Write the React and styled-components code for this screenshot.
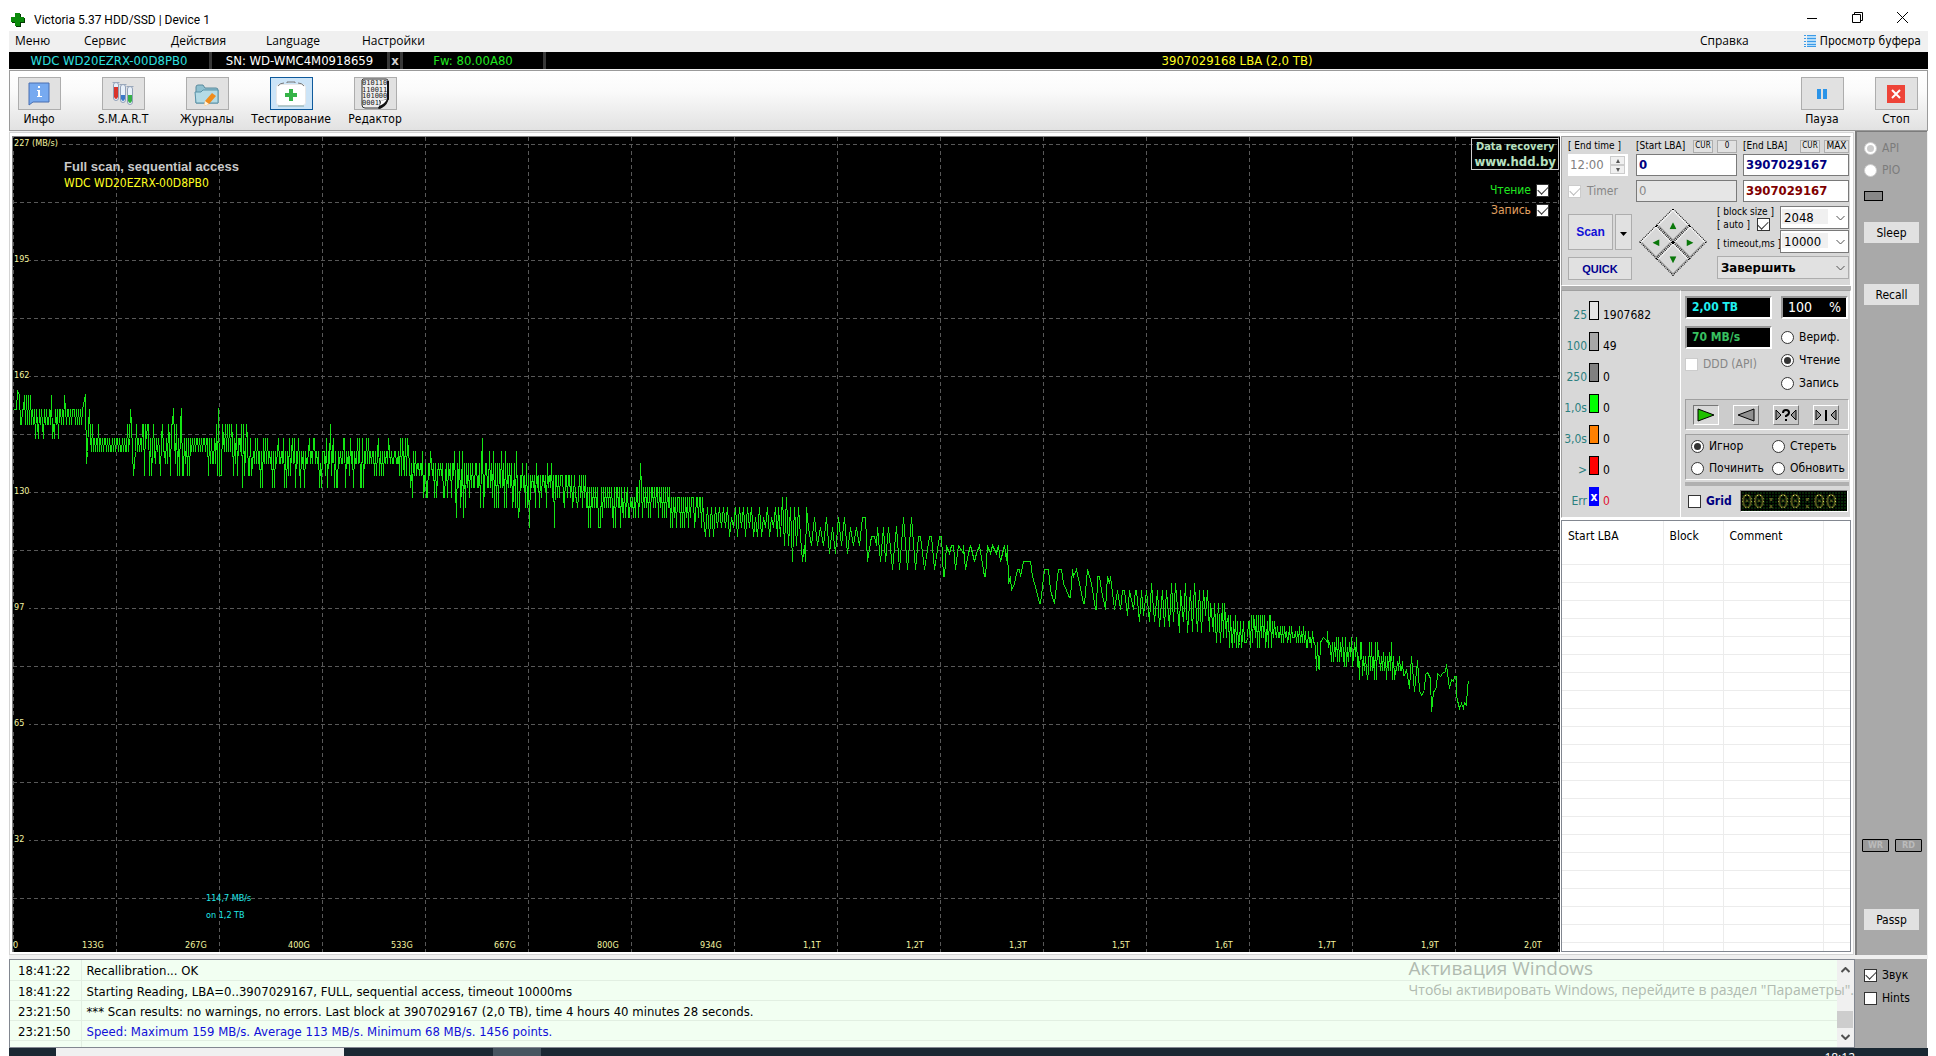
import React from 'react';
import styled, { createGlobalStyle, css } from 'styled-components';

const tahoma = '"DejaVu Sans Condensed", "DejaVu Sans", sans-serif';
const segoe = '"Open Sans", "Noto Sans", sans-serif';

const GlobalStyle = createGlobalStyle`
  * {
    box-sizing: border-box;
  }

  body {
    margin: 0;
    background: #fff;
    color: #000;
    font: 12px/16px ${tahoma};
  }

  button, input, select {
    margin: 0;
    padding: 0;
    border-radius: 0;
    color: inherit;
    font: inherit;
  }
`;

/* ---------- window frame ---------- */

const Screen = styled.div`
  display: flex;
  flex-direction: column;
  height: 100vh;
  overflow: hidden;
`;

const Window = styled.div`
  display: flex;
  flex: 1;
  flex-direction: column;
  min-height: 0;
  margin: 0 8px 0 9px;
  background: #f0f0f0;
`;

const TitleBar = styled.header`
  display: flex;
  align-items: center;
  height: 31px;
  padding: 8px 20px 0 2px;
  background: #fff;
  font: 12px/16px Roboto, sans-serif;
`;

const Title = styled.h1`
  flex: 1;
  margin: 0 0 0 9px;
  font: inherit;
`;

const WindowButtons = styled.div`
  display: flex;
  gap: 34px;
  padding-bottom: 4px;
`;

const PlainButton = styled.button`
  display: flex;
  align-items: center;
  border: 0;
  background: none;
`;

const MenuBar = styled.nav`
  display: flex;
  align-items: center;
  height: 21px;
  padding: 0 7px 2px 6px;
  font: 12px/16px ${segoe};
`;

const MenuItem = styled(PlainButton)`
  width: ${props => (props.$width ? `${props.$width}px` : 'auto')};
  white-space: nowrap;
`;

const BufferItem = styled(PlainButton)`
  gap: 4px;
  margin-left: 55px;
  padding-top: 1px;
  font-family: ${tahoma};
`;

const Spacer = styled.div`
  flex: 1;
`;

const DeviceBar = styled.div`
  display: flex;
  height: 17px;
  background: #000;
  font-size: 13px;
  line-height: 17px;
  text-align: center;
`;

const DeviceCell = styled.div`
  flex: ${props => (props.$width ? 'none' : 1)};
  width: ${props => (props.$width ? `${props.$width}px` : 'auto')};
  border-right: ${props => (props.$width ? '3px solid #383838' : 0)};
  color: ${props => props.$color};
  font-weight: ${props => (props.$bold ? 'bold' : 'normal')};
  white-space: nowrap;
`;

/* ---------- toolbar ---------- */

const Toolbar = styled.div`
  display: flex;
  height: 61px;
  margin-top: 1px;
  padding: 6px 0 0;
  border: 1px solid #9a9a9a;
  background: linear-gradient(#fff, #fafafa 35%, #e2e2e2);
`;

const ToolItem = styled.label`
  display: flex;
  flex-direction: column;
  align-items: center;
  width: ${props => props.$width || 84}px;
  white-space: nowrap;
`;

const ToolGroup = styled.div`
  display: flex;
  margin: ${props => (props.$end ? '0 -6px 0 auto' : '0 0 0 -13px')};
`;

const ToolButton = styled.button`
  display: flex;
  align-items: center;
  justify-content: center;
  width: 43px;
  height: 33px;
  margin-bottom: 1px;
  border: 1px solid ${props => (props.$active ? '#0f5a9c' : '#adadad')};
  background: ${props => (props.$active ? '#cce4f7' : '#e1e1e1')};
`;

/* ---------- workspace ---------- */

const Main = styled.main`
  display: flex;
  flex: 1;
  min-height: 0;
`;

const Surface = styled.div`
  display: flex;
  flex: 1;
  min-width: 0;
  margin: 1px 1px 0 0;
  padding: 3px 2px 2px;
  border: 1px solid #d4d4d4;
  background: #fff;
`;

const Chart = styled.div`
  position: relative;
  flex: 1;
  min-width: 0;
  border: solid #808080;
  border-width: 1px 0 0 1px;
  background: #000;

  svg {
    display: block;
    width: 100%;
    height: 100%;
  }
`;

const ChartLegend = styled.div`
  position: absolute;
  top: 1px;
  right: 1px;
  display: flex;
  flex-direction: column;
  align-items: flex-end;
  gap: 4px;

  label {
    margin-right: 10px;
  }
`;

const Banner = styled.a`
  margin-bottom: 8px;
  padding: 0 2px;
  border: 1px solid #d0d0d0;
  color: #b8e0c0;
  font-size: 11px;
  font-weight: bold;
  line-height: 15px;
  text-align: center;
  text-decoration: none;

  span {
    display: block;
    font-size: 13px;
  }
`;

const Side = styled.aside`
  display: flex;
  flex-direction: column;
  width: 291px;
  padding-left: 1px;
`;

const Panel = styled.div`
  border: 1px solid #fff;
  border-top-color: #a0a0a0;
  border-left-color: #a0a0a0;
  background: #d8d8d8;
`;

const Band = styled.div`
  height: 4px;
  background: #b0b0b0;
`;

const ScanPanel = styled(Panel)`
  height: 150px;
  padding: 0 1px 0 6px;
`;

const LbaGrid = styled.div`
  display: grid;
  grid-template-columns: 62px 1fr 106px;
  grid-template-rows: 13px 22px 22px;
  gap: 4px 6px;
`;

const FieldHead = styled.div`
  display: flex;
  align-items: center;
  gap: 4px;
  margin-bottom: -3px;
  padding-top: 2px;
  font-size: 10px;
  white-space: nowrap;

  label {
    flex: 1;
  }
`;

const TinyButton = styled.button`
  width: ${props => (props.$wide ? 25 : 20)}px;
  height: 13px;
  border: 1px solid #adadad;
  background: #e1e1e1;
  font-size: ${props => (props.$wide ? 10 : 8)}px;
  line-height: 10px;
`;

const LbaInput = styled.input`
  width: 100%;
  padding: 0 2px;
  border: 1px solid #7a7a7a;
  background: ${props => (props.disabled ? '#e6e6e6' : '#fff')};
  color: ${props => props.$color};
  font-size: 13px;
  font-weight: ${props => (props.disabled ? 'normal' : 'bold')};
`;

const TimeBox = styled.div`
  display: flex;
  width: 60px;
  padding: 2px;
  background: #fff;

  input {
    width: 40px;
    border: 0;
    background: none;
    color: #808080;
    font-size: 13px;
  }
`;

const Spinner = styled.div`
  display: flex;
  flex-direction: column;

  button {
    display: flex;
    flex: 1;
    align-items: center;
    justify-content: center;
    width: 15px;
    border: 1px solid #ccc;
    background: #f0f0f0;
  }
`;

const CheckBox = styled.input.attrs({ type: 'checkbox' })`
  display: grid;
  flex: none;
  place-content: center;
  width: 13px;
  height: 13px;
  appearance: none;
  border: 1px solid ${props => (props.disabled ? '#ccc' : '#333')};
  background: #fff;

  &:checked::after {
    width: 9px;
    height: 5px;
    margin-bottom: 2px;
    border: solid ${props => (props.disabled ? '#bbb' : '#333')};
    border-width: 0 0 1px 1px;
    content: '';
    rotate: -45deg;
  }
`;

const Radio = styled.input.attrs({ type: 'radio' })`
  display: grid;
  flex: none;
  place-content: center;
  width: 13px;
  height: 13px;
  appearance: none;
  border: 1px solid ${props => (props.disabled ? '#ccc' : '#333')};
  border-radius: 50%;
  background: #fff;

  &:checked::after {
    width: 7px;
    height: 7px;
    border-radius: 50%;
    background: ${props => (props.disabled ? '#ccc' : '#333')};
    content: '';
  }
`;

const Choice = styled.label`
  display: flex;
  align-items: center;
  gap: ${props => props.$gap || 5}px;
  color: ${props => props.$color || '#000'};
  white-space: nowrap;
`;

const ScanRow = styled.div`
  display: flex;
  justify-content: space-between;
`;

const ScanButtons = styled.div`
  display: grid;
  grid-template-columns: 45px 17px;
  grid-template-rows: 36px 23px;
  gap: 7px 2px;
  padding-top: 12px;
`;

const Button = styled.button`
  border: 1px solid ${props => (props.$flat ? '#e1e1e1' : '#adadad')};
  background: #e1e1e1;
  color: ${props => props.$color || '#000'};
  ${props =>
    props.$color &&
    css`
      font-family: "Liberation Sans", sans-serif;
      font-weight: bold;
    `}
  ${props =>
    props.$span &&
    css`
      grid-column: span 2;
      font-size: 11px;
    `}
`;

const Pad = styled.div`
  display: grid;
  grid-template-columns: 24px 24px;
  grid-template-rows: 24px 24px;
  align-self: flex-start;
  margin: 16px 11px 0 7px;
  rotate: 45deg;

  button {
    display: flex;
    align-items: center;
    justify-content: center;
    border: 1px dotted #000;
    background: #d8d8d8;
    box-shadow: inset 1px 1px #fff, inset -1px -1px #909090;
  }

  svg {
    rotate: -45deg;
  }
`;

const Options = styled.div`
  display: grid;
  grid-template-columns: 63px 69px;
  grid-template-rows: 23px 23px 25px;
  row-gap: 1px;
  padding-top: 4px;
  font-size: 10px;
  line-height: 12px;
  white-space: nowrap;
`;

const TimeoutLabel = styled.label`
  padding-top: 8px;
`;

const SelectBox = styled.div`
  position: relative;
  display: flex;
  grid-column: ${props => (props.$span ? 'span 2' : 'auto')};
  margin-top: ${props => (props.$span ? 2 : 0)}px;

  select {
    width: 100%;
    padding: 0 3px;
    appearance: none;
    border: 1px solid ${props => (props.$span ? '#adadad' : '#7a7a7a')};
    background: ${props =>
      props.$span ? '#e1e1e1' : 'linear-gradient(#f0f0f0, #f0f0f0) 1px 2px / 46px 15px no-repeat #fff'};
    font-size: 13px;
    font-weight: ${props => (props.$span ? 'bold' : 'normal')};
  }

  svg {
    position: absolute;
    top: 9px;
    right: 4px;
    pointer-events: none;
  }
`;

/* ---------- block statistics ---------- */

const InfoRow = styled.div`
  display: flex;
  height: 228px;
`;

const StatsPanel = styled(Panel)`
  width: 120px;
  padding-top: 10px;
`;

const Stat = styled.div`
  display: grid;
  grid-template-columns: 25px 10px 1fr;
  align-items: end;
  column-gap: 2px;
  height: 31px;
  padding-bottom: 9px;
  text-align: right;
`;

const StatName = styled.span`
  color: #2c8080;
  white-space: nowrap;
`;

const Swatch = styled.span`
  align-self: start;
  height: 19px;
  border: 1px solid ${props => (props.$color === '#0000ff' ? '#0000ff' : '#000')};
  background: ${props => props.$color};
  color: #fff;
  font-weight: bold;
  line-height: 18px;
  text-align: center;
`;

const StatValue = styled.span`
  padding-left: 2px;
  color: ${props => props.$color || '#000'};
  text-align: left;
`;

const ControlPanel = styled(Panel)`
  flex: 1;
  padding: 5px 1px 0 4px;
  border-left: 0;
`;

const ReadoutGrid = styled.div`
  display: grid;
  grid-template-columns: 87px 67px;
  justify-content: space-between;
  padding-right: 1px;
`;

const Stack = styled.div`
  display: flex;
  flex-direction: column;
  gap: ${props => props.$gap}px;

  output + label {
    margin-top: ${props => props.$drop || 0}px;
  }
`;

const Readout = styled.output`
  display: flex;
  justify-content: space-between;
  height: 23px;
  padding: 0 5px;
  border: 2px solid #999;
  border-right-color: #fff;
  border-bottom-color: #fff;
  background: #000;
  color: ${props => props.$color};
  font-size: ${props => (props.$plain ? 14 : 12)}px;
  font-weight: ${props => (props.$plain ? 'normal' : 'bold')};
  line-height: 18px;
`;

const Inset = styled.div`
  border: 1px solid #a0a0a0;
  border-right-color: #fff;
  border-bottom-color: #fff;
  background: #ccc;
`;

const Transport = styled(Inset)`
  display: flex;
  justify-content: space-between;
  height: 31px;
  margin-top: 8px;
  padding: 5px 9px 4px 7px;

  button {
    display: flex;
    align-items: center;
    justify-content: center;
    width: 26px;
    border: 1px solid #fff;
    border-right-color: #777;
    border-bottom-color: #777;
    background: #c8c8c8;
  }

  button:first-child {
    border-color: #777 #fff #fff #777;
    background: #d8d8d8;
  }
`;

const Repair = styled(Inset)`
  display: grid;
  grid-template-columns: 81px 1fr;
  align-content: center;
  row-gap: 6px;
  height: 46px;
  margin: 4px 0 2px;
  padding-left: 5px;
`;

const TimerRow = styled.div`
  display: flex;
  align-items: center;
  justify-content: space-between;
  padding: 4px 1px 0 3px;
  font-weight: bold;
`;

const Clock = styled.output`
  width: 108px;
  height: 22px;
  border: 1px solid #888;
  border-right-color: #fff;
  border-bottom-color: #fff;
  background:
    repeating-linear-gradient(90deg, #000 0 1px, transparent 1px 3px),
    repeating-linear-gradient(#000 0 1px, #062406 1px 3px);

  span {
    display: block;
    background: radial-gradient(circle, #e8e860 1px, #55551c 1px) 0 0 / 3px 3px;
    background-clip: text;
    color: transparent;
    font: 20px/20px "DejaVu Sans Mono", monospace;
  }
`;

const DefectList = styled.div`
  flex: 1;
  min-height: 0;
  margin-top: 2px;
  overflow: hidden;
  border: 1px solid #828790;
  background: #fff;

  table {
    width: 100%;
    border-collapse: collapse;
    table-layout: fixed;
  }

  th, td {
    padding: 0 6px;
    border-right: 1px solid #ececec;
  }

  th {
    height: 25px;
    padding-top: 4px;
    font-weight: normal;
    text-align: left;
  }

  td {
    height: 18px;
    border-bottom: 1px solid #ececec;
  }

  th:last-child, td:last-child {
    border-right: 0;
  }
`;

/* ---------- right rail ---------- */

const Rail = styled.aside`
  display: flex;
  flex-direction: column;
  width: 72px;
  margin: 0 1px 0 0;
  padding: 8px 6px 25px 7px;
  border: solid #7c7c7c;
  border-width: 1px 0 0 2px;
  background: #a9a9a9;
`;

const RailButton = styled(Button)`
  width: 55px;
  height: 21px;
  margin: ${props => props.$margin};
`;

const Led = styled.div`
  width: 19px;
  height: 10px;
  margin-top: 13px;
  border: 1px solid #000;
  background: #888;
`;

const Lamps = styled.div`
  display: flex;
  justify-content: space-between;
  margin-right: -1px;
  margin-left: -2px;
`;

const Lamp = styled.span`
  width: 27px;
  height: 13px;
  border: 1px solid #000;
  border-radius: 1px;
  background: #999;
  color: #bbb;
  font-size: 9px;
  font-weight: bold;
  line-height: 11px;
  text-align: center;
`;

/* ---------- log ---------- */

const Footer = styled.footer`
  display: flex;
  height: 89px;
  margin-top: 4px;
`;

const LogBox = styled.div`
  position: relative;
  display: flex;
  flex: 1;
  overflow: hidden;
  border: 1px solid #828790;
  background: #f2fff2;
  font-size: 13px;

  table {
    flex: 1;
    border-collapse: collapse;
    table-layout: fixed;
  }

  td {
    height: 20px;
    padding: 3px 0 0 5px;
    border-bottom: 1px solid #e2efe2;
    white-space: nowrap;
  }

  td:first-child {
    width: 71px;
    padding-left: 8px;
    border-right: 1px solid #e2efe2;
  }
`;

const LogText = styled.td`
  color: ${props => props.$color || '#000'};
`;

const ScrollBar = styled.div`
  display: flex;
  flex-direction: column;
  width: 17px;
  background: #f0f0f0;

  button {
    justify-content: center;
    height: 20px;
  }
`;

const Thumb = styled.div`
  height: 17px;
  margin: 32px 1px 0 0;
  background: #cdcdcd;
`;

const Watermark = styled.div`
  position: absolute;
  top: -4px;
  right: 0;
  color: #b0bab0;
  font: 14px/20px ${segoe};
  pointer-events: none;
  white-space: nowrap;

  strong {
    display: block;
    font-size: 19px;
    font-weight: normal;
    line-height: 24px;
  }
`;

const LogOptions = styled.div`
  display: flex;
  flex-direction: column;
  gap: 7px;
  width: 73px;
  padding: 8px 9px;
  border-right: 1px solid #fff;
  background: #a9a9a9;
`;

const Taskbar = styled.div`
  display: flex;
  height: 8px;
  margin: 0 8px 0 9px;
  overflow: hidden;
  background: #1a2833;
  color: #fff;
  font: 12px/16px ${segoe};
`;

const TaskItem = styled.div`
  width: ${props => props.$width}px;
  margin-left: ${props => props.$left}px;
  background: ${props => props.$color};
`;

const TaskClock = styled.time`
  margin: 2px 73px 0 auto;
`;

/* ---------- icons ---------- */

const CrossLogo = () => (
  <svg width="14" height="14" viewBox="0 0 14 14">
    <path d="M5 1h5v4h4v5h-4v4H5v-4H1V5h4z" fill="#053a05" />
    <path d="M4 0h5v4h4v5H9v4H4V9H0V4h4z" fill="#0a8a0a" />
  </svg>
);

const InfoIcon = () => (
  <svg width="22" height="24" viewBox="0 0 22 24">
    <path d="M1 1h20v19H5l-4 3z" fill="#77aaf0" stroke="#4a6fb0" />
    <path d="M9 8h3v6h2v1H9v-1h1V9H9zM10 4h2v2h-2z" fill="#fff" />
  </svg>
);

const SmartIcon = () => (
  <svg width="24" height="24" viewBox="0 0 24 24">
    {[
      ['#d9342b', 2, 0, 5],
      ['#3a78c8', 9, 2, 13],
      ['#35b048', 16, 4, 13],
    ].map(([color, x, y, fill]) => (
      <g key={x}>
        <rect x={x + 0.5} y={y + 0.5} width="5" height="18" rx="2.5" fill="#e9f1fa" stroke="#90a0b8" />
        <path d={`M${x + 1} ${fill}h4v${y + 15 - fill}q-2 4-4 0z`} fill={color} />
        <path d={`M${x - 0.5} ${y + 0.5}h7`} stroke="#9aa8bb" />
      </g>
    ))}
  </svg>
);

const JournalIcon = () => (
  <svg width="26" height="24" viewBox="0 0 26 24">
    <path d="M2 21V5q0-2 2-2h5l2 3h11q2 0 2 2v13z" fill="#8fc0d0" stroke="#5a8a9c" />
    <path d="M1 10h6l2-2h15v13H2z" fill="#b4dbe6" stroke="#5a93a8" />
    <path d="M18 11l4 3-7 8-5 2 1-5z" fill="#f08c1c" />
    <path d="M11 19l4 3-5 2z" fill="#fff3df" />
  </svg>
);

const TestIcon = () => (
  <svg width="32" height="28" viewBox="0 0 32 28">
    <rect x="1.5" y="4.5" width="29" height="21" rx="3" fill="#fff" stroke="#e8e8e8" />
    <path d="M3 6q2-3 6-3M12 3v-1h8v1M23 3q4 0 6 3" stroke="#777" fill="none" />
    <path d="M3 26h26" stroke="#8aa" />
    <path d="M14 9h4v4h4v4h-4v4h-4v-4h-4v-4h4z" fill="#36b348" />
  </svg>
);

const BinaryIcon = () => (
  <svg width="30" height="31" viewBox="0 0 30 31">
    <path d="M3 1h23q2 0 2 2v18l-8 9H5q-3 0-3-3V2z" fill="#eee" stroke="#333" />
    <path d="M28 3v18l-8 9" fill="none" stroke="#111" strokeWidth="2" />
    <g fill="#222" fontFamily="DejaVu Sans Mono, monospace" fontSize="7">
      <text x="2" y="7">010110</text>
      <text x="2" y="14">110011</text>
      <text x="2" y="20">101000</text>
      <text x="2" y="27">0001</text>
    </g>
    <path d="M18 30q3-4 1-8 5 1 9-2v3q-2 6-9 8z" fill="#111" />
    <path d="M19 28q3-3 1-6 4 1 7-1-2 5-8 7z" fill="#fff" />
  </svg>
);

const PauseIcon = () => (
  <svg width="10" height="10">
    <path d="M0 0h4v10H0zM6 0h4v10H6z" fill="#2b94e8" />
  </svg>
);

const StopIcon = () => (
  <svg width="18" height="18">
    <path d="M0 0h18v18H0z" fill="#ee4438" />
    <path d="M5 5l8 8M13 5l-8 8" stroke="#fff" strokeWidth="2" />
  </svg>
);

const ListIcon = () => (
  <svg width="12" height="12" shapeRendering="crispEdges">
    <path d="M3 0h9v12H3z" fill="#b5dcf8" />
    <path d="M0 .5h2M3 .5h9M0 3.5h2M3 3.5h9M0 6.5h2M3 6.5h9M0 9.5h2M3 9.5h9M0 11.5h2M3 11.5h9" stroke="#3c9be8" />
  </svg>
);

const Chevron = ({ up, bold }) => (
  <svg width="9" height="6" viewBox="0 0 9 6">
    <path
      d={up ? 'M.5 5l4-4 4 4' : 'M.5 1l4 4 4-4'}
      fill="none"
      stroke="#505050"
      strokeWidth={bold ? 2 : 1}
    />
  </svg>
);

const Triangle = ({ dir, size = 7, color = '#0a780a' }) => {
  const points = {
    up: '4,0 8,8 0,8',
    down: '0,0 8,0 4,8',
    left: '8,0 8,8 0,4',
    right: '0,0 8,4 0,8',
  };
  return (
    <svg width={size} height={size} viewBox="0 0 8 8">
      <polygon points={points[dir]} fill={color} />
    </svg>
  );
};

/* ---------- speed graph ---------- */

// y of every speed step the drive reports, fast to slow
const LEVELS = [
  258, 272, 287, 301, 314, 326, 338, 350, 360, 370, 380, 390, 399, 408, 416, 424, 432, 439, 446,
  453, 460, 466, 472, 478, 484, 489, 494, 500, 505, 510, 515, 519, 524, 529, 533, 538, 542,
];

// [from, to, top, bodyTop, bodyBottom, bottom, chance of leaving the body]
const NOISE = [
  [7, 20, 0, 1, 2, 2, 0.5],
  [20, 47, 1, 1, 2, 3, 0.2],
  [47, 70, 1, 1, 2, 2, 0.2],
  [74, 116, 2, 3, 4, 4, 0.1],
  [116, 125, 2, 3, 4, 5, 0.4],
  [125, 157, 2, 3, 4, 6, 0.3],
  [157, 177, 2, 3, 5, 6, 0.6],
  [177, 195, 3, 3, 4, 4, 0.1],
  [195, 210, 2, 3, 5, 6, 0.5],
  [210, 237, 2, 3, 4, 6, 0.3],
  [237, 272, 3, 4, 5, 7, 0.3],
  [272, 327, 3, 4, 5, 7, 0.4],
  [327, 362, 3, 4, 5, 7, 0.3],
  [362, 397, 3, 4, 5, 6, 0.3],
  [397, 442, 4, 5, 6, 8, 0.3],
  [442, 507, 4, 5, 7, 9, 0.3],
  [507, 542, 5, 6, 7, 9, 0.3],
  [542, 573, 6, 6, 8, 9, 0.3],
  [573, 612, 7, 7, 9, 11, 0.4],
  [612, 627, 7, 8, 9, 10, 0.3],
  [627, 657, 7, 7, 9, 10, 0.3],
  [657, 690, 8, 8, 10, 11, 0.4],
  [1213, 1245, 23, 24, 27, 29, 0.5],
  [1245, 1262, 23, 25, 27, 29, 0.4],
  [1262, 1292, 25, 26, 27, 28, 0.4],
  [1292, 1302, 26, 27, 28, 29, 0.3],
  [1314, 1328, 27, 28, 29, 32, 0.4],
  [1328, 1345, 27, 29, 31, 33, 0.4],
  [1345, 1382, 28, 31, 34, 36, 0.4],
  [1382, 1392, 31, 32, 34, 35, 0.3],
];

// slower swings: [from, to, step, top, bottom]
const WAVES = [
  [690, 765, 2, 9, 12],
  [765, 795, 2, 8, 13],
  [795, 852, 3, 10, 14],
];

const SPIKES = [
  [3, 272], [4, 253], [6, 258], [38, 258], [51, 258], [72, 257], [73, 326], [76, 272],
  [117, 272], [120, 338], [160, 271], [168, 271], [205, 271], [229, 350], [317, 287],
  [443, 380], [450, 380], [469, 301], [505, 380], [516, 390], [541, 390], [627, 326],
  [779, 424], [781, 370], [789, 424], [792, 424],
];

// read point by point where the curve opens up
const TAIL = [
  [852, 380], [854, 424], [858, 399], [861, 399], [863, 408], [864, 390], [867, 424], [870, 390],
  [872, 424], [875, 390], [879, 432], [883, 389], [886, 432], [890, 380], [894, 432], [898, 380],
  [902, 432], [905, 399], [907, 399], [911, 432], [916, 399], [918, 399], [921, 432], [926, 399],
  [928, 399], [930, 439], [931, 439], [933, 408], [936, 416], [938, 408], [940, 408], [942, 432],
  [945, 408], [950, 416], [950, 408], [952, 432], [955, 416], [957, 408], [961, 424], [963, 416],
  [966, 408], [971, 439], [972, 439], [974, 408], [977, 416], [979, 408], [983, 416], [985, 408],
  [987, 424], [991, 408], [993, 423], [994, 408], [995, 446], [997, 439], [998, 453], [1001, 446],
  [1004, 432], [1006, 432], [1007, 439], [1010, 424], [1017, 424], [1019, 439], [1021, 446],
  [1023, 453], [1026, 466], [1027, 466], [1031, 432], [1035, 432], [1037, 453], [1041, 466],
  [1044, 439], [1045, 432], [1048, 432], [1050, 446], [1056, 460], [1057, 460], [1059, 432],
  [1060, 439], [1063, 432], [1066, 446], [1070, 466], [1071, 466], [1074, 432], [1078, 446],
  [1082, 472], [1083, 472], [1084, 439], [1086, 439], [1088, 453], [1092, 472], [1094, 439],
  [1096, 446], [1097, 439], [1101, 472], [1104, 453], [1107, 472], [1109, 453], [1111, 453],
  [1114, 478], [1116, 453], [1120, 472], [1122, 453], [1123, 453], [1126, 484], [1128, 453],
  [1130, 478], [1133, 453], [1136, 484], [1138, 446], [1141, 484], [1144, 453], [1146, 489],
  [1149, 453], [1151, 489], [1153, 453], [1156, 489], [1158, 446], [1160, 484], [1162, 446],
  [1166, 495], [1167, 453], [1170, 484], [1172, 446], [1174, 495], [1177, 453], [1179, 494],
  [1181, 446], [1184, 494], [1186, 453], [1188, 495], [1190, 453], [1192, 478], [1194, 453],
  [1196, 494], [1197, 466], [1200, 494], [1201, 466], [1203, 505], [1205, 466], [1207, 505],
  [1209, 466], [1210, 500], [1211, 466], [1213, 484],
];

const END = [
  [1302, 510], [1303, 533], [1304, 505], [1305, 530], [1306, 532], [1307, 505], [1310, 500],
  [1312, 502], [1314, 494],
  [1393, 532], [1396, 551], [1398, 519], [1401, 554], [1404, 523], [1406, 553], [1408, 558],
  [1411, 553], [1412, 537], [1414, 535], [1417, 541], [1418, 574], [1420, 555], [1423, 550],
  [1424, 536], [1427, 539], [1429, 536], [1432, 534], [1433, 527], [1436, 551], [1438, 542],
  [1440, 544], [1441, 539], [1443, 539], [1443, 558], [1444, 563], [1446, 571], [1448, 566],
  [1450, 571], [1451, 565], [1453, 568], [1454, 550], [1455, 544],
];

const buildTrace = () => {
  let seed = 41;
  let low = false;
  const random = () => {
    seed = (seed * 16807) % 2147483647;
    return seed / 2147483647;
  };
  const noisy = ([from, to, top, bodyTop, bodyBottom, bottom, chance]) => {
    const points = [];
    for (let x = from; x < to; x += 1) {
      low = random() < 0.85 ? !low : low;
      const reach = random();
      const edge = low ? bottom : top;
      const body = low ? bodyBottom : bodyTop;
      const between = Math.round((edge + body) / 2);
      points.push([x, LEVELS[reach < chance ? edge : reach < chance * 1.4 ? between : body]]);
    }
    return points;
  };
  const wavy = ([from, to, step, top, bottom]) => {
    const points = [];
    for (let x = from, down = false; x < to; x += step, down = !down) {
      const shift = random() < 0.4 ? 1 : 0;
      points.push([x, LEVELS[down ? bottom - shift : top + shift]]);
    }
    return points;
  };
  const body = [...NOISE.flatMap(noisy), ...WAVES.flatMap(wavy)].filter(
    ([x]) => !SPIKES.some(spike => spike[0] === x),
  );
  return [[0, 272], ...body, ...SPIKES, ...TAIL, ...END]
    .sort((a, b) => a[0] - b[0])
    .map(([x, y]) => `${x + 0.5},${y + 0.5}`)
    .join(' ');
};

const trace = buildTrace();
const speedLabels = ['227 (MB/s)', '195', '162', '130', '97', '65', '32'];
const sizeLabels = [
  '133G', '267G', '400G', '533G', '667G', '800G', '934G', '1,1T', '1,2T', '1,3T', '1,5T', '1,6T',
  '1,7T', '1,9T', '2,0T',
];

const SpeedGraph = () => (
  <svg viewBox="0 0 1547 815" preserveAspectRatio="xMinYMin meet" fontFamily={tahoma}>
    <g stroke="#585858" strokeDasharray="4 3" shapeRendering="crispEdges">
      {Array.from({ length: 15 }, (_, i) => (
        <line key={i} x1={i * 103 + 0.5} x2={i * 103 + 0.5} y1="0" y2="815" />
      ))}
      <line x1="1545.5" x2="1545.5" y1="0" y2="815" />
      {Array.from({ length: 14 }, (_, i) => (
        <line key={i} x1="0" x2="1547" y1={i * 58 + 7.5} y2={i * 58 + 7.5} />
      ))}
    </g>
    <polyline points={trace} fill="none" stroke="#14e614" shapeRendering="crispEdges" />
    <g fill="#f4f4a0" fontSize="9">
      {speedLabels.map((label, i) => (
        <g key={label}>
          <rect x="0" y={i * 116 + 1} width={i ? 16 : 48} height="12" fill="#000" />
          <text x="1" y={i * 116 + 9}>{label}</text>
        </g>
      ))}
      <text x="0" y="811">0</text>
      {sizeLabels.map((label, i) => (
        <text key={label} x={i * 103 + 69} y="811">{label}</text>
      ))}
    </g>
    <text x="51" y="34" fill="#c8c8c8" fontFamily="Liberation Sans, sans-serif" fontSize="13" fontWeight="bold">
      Full scan, sequential access
    </text>
    <text x="51" y="50" fill="#ffff20" fontSize="12">WDC WD20EZRX-00D8PB0</text>
    <g fill="#20e8e8" fontSize="9">
      <text x="193" y="764">114,7 MB/s</text>
      <text x="193" y="781">on 1,2 TB</text>
    </g>
  </svg>
);

/* ---------- data ---------- */

const menu = [['Меню', 69], ['Сервис', 87], ['Действия', 95], ['Language', 96], ['Настройки', 70]];

const tools = [
  ['Инфо', InfoIcon],
  ['S.M.A.R.T', SmartIcon],
  ['Журналы', JournalIcon],
  ['Тестирование', TestIcon],
  ['Редактор', BinaryIcon],
];

const stats = [
  ['25', '#e6e6e6', '1907682'],
  ['100', '#a8a8a8', '49'],
  ['250', '#808080', '0'],
  ['1,0s', '#00ff00', '0'],
  ['3,0s', '#ff8000', '0'],
  ['>', '#ff0000', '0'],
  ['Err', '#0000ff', '0'],
];

const log = [
  ['18:41:22', 'Recallibration... OK'],
  ['18:41:22', 'Starting Reading, LBA=0..3907029167, FULL, sequential access, timeout 10000ms'],
  ['23:21:50', '*** Scan results: no warnings, no errors. Last block at 3907029167 (2,0 TB), time 4 hours 40 minutes 28 seconds.'],
  ['23:21:50', 'Speed: Maximum 159 MB/s. Average 113 MB/s. Minimum 68 MB/s. 1456 points.', '#1010d8'],
];

const Tool = ({ label, icon: Icon, width, active }) => (
  <ToolItem $width={width}>
    <ToolButton $active={active}>
      <Icon />
    </ToolButton>
    {label}
  </ToolItem>
);

const ScanSettings = () => (
  <ScanPanel>
    <LbaGrid>
      <FieldHead>
        <label htmlFor="end-time">[ End time ]</label>
      </FieldHead>
      <FieldHead>
        <label htmlFor="start-lba">[Start LBA]</label>
        <TinyButton>CUR</TinyButton>
        <TinyButton>0</TinyButton>
      </FieldHead>
      <FieldHead>
        <label htmlFor="end-lba">[End LBA]</label>
        <TinyButton>CUR</TinyButton>
        <TinyButton $wide>MAX</TinyButton>
      </FieldHead>
      <TimeBox>
        <input id="end-time" defaultValue="12:00" disabled />
        <Spinner>
          <button aria-label="Later"><Triangle dir="up" size={4} color="#555" /></button>
          <button aria-label="Earlier"><Triangle dir="down" size={4} color="#555" /></button>
        </Spinner>
      </TimeBox>
      <LbaInput id="start-lba" defaultValue="0" $color="#000080" />
      <LbaInput id="end-lba" defaultValue="3907029167" $color="#000080" />
      <Choice $color="#868686" $gap={6}>
        <CheckBox defaultChecked disabled />
        Timer
      </Choice>
      <LbaInput aria-label="Current LBA" defaultValue="0" disabled $color="#888" />
      <LbaInput aria-label="Last LBA" defaultValue="3907029167" $color="#800000" />
    </LbaGrid>
    <ScanRow>
      <ScanButtons>
        <Button $color="#1010d8">Scan</Button>
        <Button aria-label="Scan mode">
          <svg width="7" height="4"><path d="M0 0h7L3.5 4z" /></svg>
        </Button>
        <Button $span $color="#000090">QUICK</Button>
      </ScanButtons>
      <Pad>
        <button aria-label="Up"><Triangle dir="up" /></button>
        <button aria-label="Right"><Triangle dir="right" /></button>
        <button aria-label="Left"><Triangle dir="left" /></button>
        <button aria-label="Down"><Triangle dir="down" /></button>
      </Pad>
      <Options>
        <div>
          <label htmlFor="block-size">[ block size ]</label>
          <Choice $gap={7}>
            [ auto ]
            <CheckBox defaultChecked />
          </Choice>
        </div>
        <SelectBox>
          <select id="block-size"><option>2048</option></select>
          <Chevron />
        </SelectBox>
        <TimeoutLabel htmlFor="timeout">[ timeout,ms ]</TimeoutLabel>
        <SelectBox>
          <select id="timeout"><option>10000</option></select>
          <Chevron />
        </SelectBox>
        <SelectBox $span>
          <select aria-label="At the end"><option>Завершить</option></select>
          <Chevron />
        </SelectBox>
      </Options>
    </ScanRow>
  </ScanPanel>
);

const BlockStats = () => (
  <StatsPanel>
    {stats.map(([name, color, value]) => (
      <Stat key={name}>
        <StatName>{name}</StatName>
        <Swatch $color={color}>{name === 'Err' && 'x'}</Swatch>
        <StatValue $color={name === 'Err' ? '#e01030' : undefined}>{value}</StatValue>
      </Stat>
    ))}
  </StatsPanel>
);

const Controls = () => (
  <ControlPanel>
    <ReadoutGrid>
      <Stack $gap={7}>
        <Readout $color="#20f0f0">2,00 TB</Readout>
        <Readout $color="#38c060">70 MB/s</Readout>
        <Choice $color="#868686">
          <CheckBox disabled />
          DDD (API)
        </Choice>
      </Stack>
      <Stack $gap={7} $drop={3}>
        <Readout $plain $color="#fff">
          <span>100</span>
          <span>%</span>
        </Readout>
        <Choice><Radio name="mode" />Вериф.</Choice>
        <Choice><Radio name="mode" defaultChecked />Чтение</Choice>
        <Choice><Radio name="mode" />Запись</Choice>
      </Stack>
    </ReadoutGrid>
    <Transport>
      <button aria-label="Forward">
        <svg width="18" height="14"><path d="M1 1l16 6-16 6z" fill="#20c000" stroke="#000" /></svg>
      </button>
      <button aria-label="Backward">
        <svg width="18" height="14"><path d="M17 1L1 7l16 6z" fill="#909090" stroke="#000" /></svg>
      </button>
      <button aria-label="Random">
        <svg width="22" height="14">
          <path d="M1 2l5 5-5 5zM21 2l-5 5 5 5z" fill="#909090" stroke="#000" />
          <path d="M8 5q0-3 3-3t3 2.5q0 2-3 3.5v1M11 11v2" fill="none" stroke="#000" strokeWidth="2" />
        </svg>
      </button>
      <button aria-label="Butterfly">
        <svg width="22" height="14">
          <path d="M1 2l5 5-5 5zM21 2l-5 5 5 5z" fill="#909090" stroke="#000" />
          <path d="M11 2v11" stroke="#000" strokeWidth="2" />
        </svg>
      </button>
    </Transport>
    <Repair>
      <Choice><Radio name="repair" defaultChecked />Игнор</Choice>
      <Choice><Radio name="repair" />Стереть</Choice>
      <Choice><Radio name="repair" />Починить</Choice>
      <Choice><Radio name="repair" />Обновить</Choice>
    </Repair>
    <Band />
    <TimerRow>
      <Choice $color="#000080">
        <CheckBox />
        Grid
      </Choice>
      <Clock><span>00:00:00</span></Clock>
    </TimerRow>
  </ControlPanel>
);

const Defects = () => (
  <DefectList>
    <table>
      <colgroup>
        <col width="101" />
        <col width="60" />
        <col width="100" />
        <col />
      </colgroup>
      <thead>
        <tr>
          <th>Start LBA</th>
          <th>Block</th>
          <th>Comment</th>
          <th />
        </tr>
      </thead>
      <tbody>
        {Array.from({ length: 24 }, (_, i) => (
          <tr key={i}>
            <td />
            <td />
            <td />
            <td />
          </tr>
        ))}
      </tbody>
    </table>
  </DefectList>
);

const App = () => (
  <Screen>
    <GlobalStyle />
    <Window>
      <TitleBar>
        <CrossLogo />
        <Title>Victoria 5.37 HDD/SSD | Device 1</Title>
        <WindowButtons>
          <PlainButton aria-label="Minimize">
            <svg width="11" height="11"><path d="M0 6.5h10" stroke="#000" /></svg>
          </PlainButton>
          <PlainButton aria-label="Restore">
            <svg width="11" height="11">
              <path d="M.5 2.5h8v8h-8zM2.5 2.5v-2h8v8h-2" fill="none" stroke="#000" />
            </svg>
          </PlainButton>
          <PlainButton aria-label="Close">
            <svg width="11" height="11"><path d="M0 0l11 11M11 0L0 11" stroke="#000" /></svg>
          </PlainButton>
        </WindowButtons>
      </TitleBar>
      <MenuBar>
        {menu.map(([label, width]) => (
          <MenuItem key={label} $width={width}>{label}</MenuItem>
        ))}
        <Spacer />
        <MenuItem>Справка</MenuItem>
        <BufferItem>
          <ListIcon />
          Просмотр буфера
        </BufferItem>
      </MenuBar>
      <DeviceBar>
        <DeviceCell $width={203} $color="#30e0e0">WDC WD20EZRX-00D8PB0</DeviceCell>
        <DeviceCell $width={178} $color="#fff">SN: WD-WMC4M0918659</DeviceCell>
        <DeviceCell $width={13} $color="#d0d0d0" $bold>x</DeviceCell>
        <DeviceCell $width={143} $color="#20e820">Fw: 80.00A80</DeviceCell>
        <DeviceCell $color="#ffff20">3907029168 LBA (2,0 TB)</DeviceCell>
      </DeviceBar>
      <Toolbar>
        <ToolGroup>
          {tools.map(([label, icon]) => (
            <Tool key={label} label={label} icon={icon} active={label === 'Тестирование'} />
          ))}
        </ToolGroup>
        <ToolGroup $end>
          <Tool label="Пауза" icon={PauseIcon} width={74} />
          <Tool label="Стоп" icon={StopIcon} width={74} />
        </ToolGroup>
      </Toolbar>
      <Main>
        <Surface>
          <Chart>
            <SpeedGraph />
            <ChartLegend>
              <Banner href="#hdd">
                Data recovery
                <span>www.hdd.by</span>
              </Banner>
              <Choice $color="#20e820">
                Чтение
                <CheckBox defaultChecked />
              </Choice>
              <Choice $color="#e0a060">
                Запись
                <CheckBox defaultChecked />
              </Choice>
            </ChartLegend>
          </Chart>
          <Side>
            <ScanSettings />
            <Band />
            <InfoRow>
              <BlockStats />
              <Controls />
            </InfoRow>
            <Defects />
          </Side>
        </Surface>
        <Rail>
          <Stack $gap={6}>
            <Choice $color="#7c7c7c"><Radio name="io" defaultChecked disabled />API</Choice>
            <Choice $color="#7c7c7c"><Radio name="io" disabled />PIO</Choice>
          </Stack>
          <Led />
          <RailButton $flat $margin="21px 0 41px">Sleep</RailButton>
          <RailButton $flat>Recall</RailButton>
          <Spacer />
          <Lamps>
            <Lamp>WR</Lamp>
            <Lamp>RD</Lamp>
          </Lamps>
          <RailButton $flat $margin="57px 0 0">Passp</RailButton>
        </Rail>
      </Main>
      <Footer>
        <LogBox>
          <table>
            <tbody>
              {log.map(([time, text, color], i) => (
                <tr key={i}>
                  <td>{time}</td>
                  <LogText $color={color}>{text}</LogText>
                </tr>
              ))}
              <tr>
                <td />
                <td />
              </tr>
            </tbody>
          </table>
          <ScrollBar>
            <PlainButton aria-label="Scroll up"><Chevron up bold /></PlainButton>
            <Thumb />
            <PlainButton aria-label="Scroll down"><Chevron bold /></PlainButton>
          </ScrollBar>
          <Watermark>
            <strong>Активация Windows</strong>
            Чтобы активировать Windows, перейдите в раздел "Параметры".
          </Watermark>
        </LogBox>
        <LogOptions>
          <Choice>
            <CheckBox defaultChecked />
            Звук
          </Choice>
          <Choice>
            <CheckBox />
            Hints
          </Choice>
        </LogOptions>
      </Footer>
    </Window>
    <Taskbar>
      <TaskItem $left={47} $width={288} $color="#f0f0f0" />
      <TaskItem $left={149} $width={48} $color="#465560" />
      <TaskClock>18:12</TaskClock>
    </Taskbar>
  </Screen>
);

export default App;
